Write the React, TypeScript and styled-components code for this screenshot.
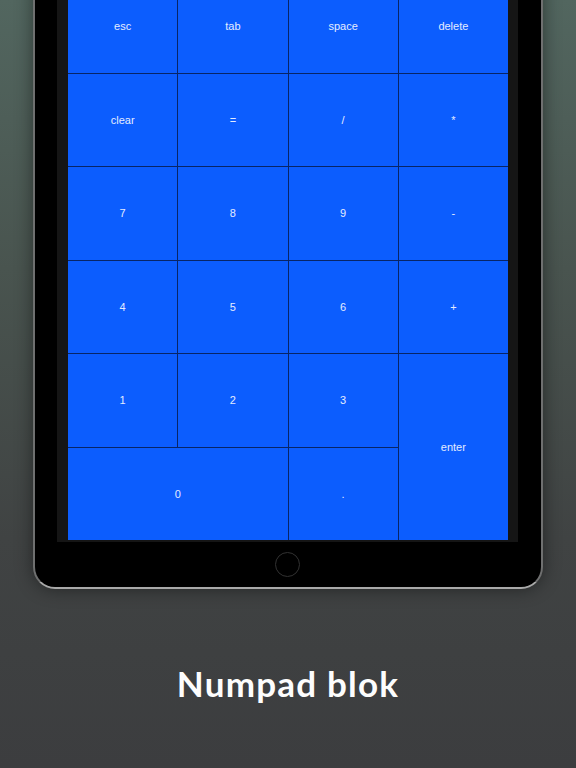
import styled, { createGlobalStyle } from 'styled-components';

const GlobalStyle = createGlobalStyle`
  html, body {
    margin: 0;
    padding: 0;
    background: #3d3e40;
  }
  * {
    box-sizing: border-box;
  }
`;

const Page = styled.div`
  width: 576px;
  height: 768px;
  overflow: hidden;
  display: flex;
  flex-direction: column;
  background: linear-gradient(180deg, #52665f 0%, #49544f 35%, #404343 70%, #3c3d3f 100%);
`;

const Tablet = styled.div`
  margin: -40px 0 0 33px;
  width: 510px;
  display: flex;
  flex-direction: column;
  padding: 16px 23px 0 22px;
  background: #000;
  border: 2px solid #6f7070;
  border-bottom-color: #a9a9a9;
  border-radius: 22px;
  box-shadow: 0 0 18px rgba(0, 0, 0, 0.45);
`;

const Screen = styled.div`
  background: #151515;
  padding: 2px 10px 2px 11px;
`;

const Keypad = styled.div`
  display: grid;
  grid-template-columns: repeat(4, 1fr);
  grid-template-rows: repeat(6, 1fr);
  gap: 1px;
  width: 440px;
  height: 560px;
  background: #082566;
`;

const Key = styled.div<{ $col?: string; $row?: string }>`
  display: flex;
  align-items: center;
  justify-content: center;
  background: #0c5dfe;
  color: #e4ecff;
  font-family: 'Liberation Sans', Arial, sans-serif;
  font-size: 11px;
  grid-column: ${(p) => p.$col ?? 'auto'};
  grid-row: ${(p) => p.$row ?? 'auto'};
`;

const HomeRow = styled.div`
  height: 45px;
  display: flex;
  align-items: center;
  justify-content: center;
`;

const HomeButton = styled.div`
  width: 25px;
  height: 25px;
  border-radius: 50%;
  border: 1.5px solid #323232;
`;

const Caption = styled.h1`
  margin: 73px 0 0;
  text-align: center;
  color: #fdfdfd;
  font-family: Lato, 'Noto Sans', sans-serif;
  font-weight: 700;
  font-size: 35px;
  letter-spacing: 1.2px;
`;

const keys = [
  'esc', 'tab', 'space', 'delete',
  'clear', '=', '/', '*',
  '7', '8', '9', '-',
  '4', '5', '6', '+',
  '1', '2', '3',
];

export default function App() {
  return (
    <>
      <GlobalStyle />
      <Page>
        <Tablet>
          <Screen>
            <Keypad>
              {keys.map((k) => (
                <Key key={k}>{k}</Key>
              ))}
              <Key $col="4" $row="5 / span 2">enter</Key>
              <Key $col="1 / span 2" $row="6">0</Key>
              <Key $col="3" $row="6">.</Key>
            </Keypad>
          </Screen>
          <HomeRow>
            <HomeButton />
          </HomeRow>
        </Tablet>
        <Caption>Numpad blok</Caption>
      </Page>
    </>
  );
}
